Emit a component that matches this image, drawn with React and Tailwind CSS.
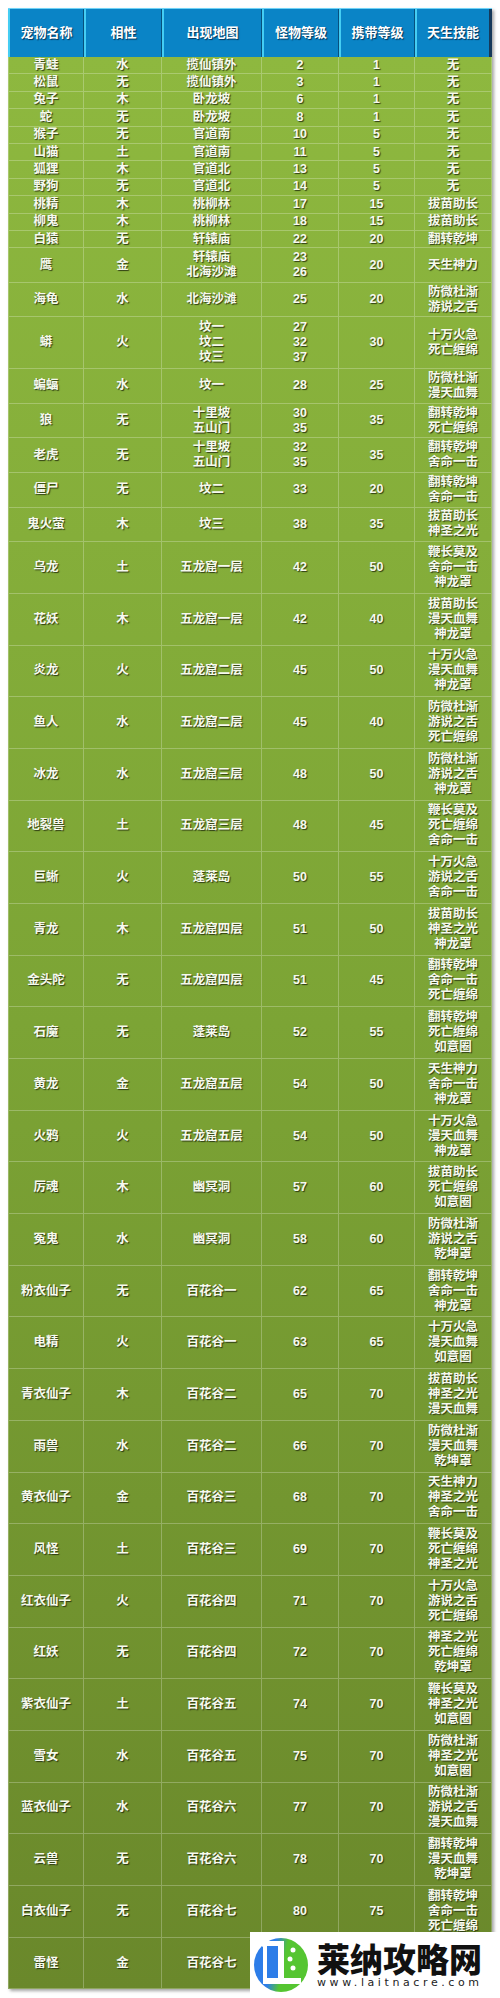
import React from 'react';

// column widths, left to right
const COLS = ['w-[76px]', 'w-[78px]', 'w-[100px]', 'w-[77px]', 'w-[76px]', 'w-[77px]'];
const ROW_H = { 1: 'h-[17.4px]', 2: 'h-[34.6px]', 3: 'h-[51.7px]' };

const HEAD = ['宠物名称', '相性', '出现地图', '怪物等级', '携带等级', '天生技能'];

const PETS = [
    ['青蛙', '水', '揽仙镇外', '2', '1', '无'],
    ['松鼠', '无', '揽仙镇外', '3', '1', '无'],
    ['兔子', '木', '卧龙坡', '6', '1', '无'],
    ['蛇', '无', '卧龙坡', '8', '1', '无'],
    ['猴子', '无', '官道南', '10', '5', '无'],
    ['山猫', '土', '官道南', '11', '5', '无'],
    ['狐狸', '木', '官道北', '13', '5', '无'],
    ['野狗', '无', '官道北', '14', '5', '无'],
    ['桃精', '木', '桃柳林', '17', '15', '拔苗助长'],
    ['柳鬼', '木', '桃柳林', '18', '15', '拔苗助长'],
    ['白猿', '无', '轩辕庙', '22', '20', '翻转乾坤'],
    ['鹰', '金', '轩辕庙/北海沙滩', '23/26', '20', '天生神力'],
    ['海龟', '水', '北海沙滩', '25', '20', '防微杜渐/游说之舌'],
    ['蟒', '火', '坟一/坟二/坟三', '27/32/37', '30', '十万火急/死亡缠绵'],
    ['蝙蝠', '水', '坟一', '28', '25', '防微杜渐/漫天血舞'],
    ['狼', '无', '十里坡/五山门', '30/35', '35', '翻转乾坤/死亡缠绵'],
    ['老虎', '无', '十里坡/五山门', '32/35', '35', '翻转乾坤/舍命一击'],
    ['僵尸', '无', '坟二', '33', '20', '翻转乾坤/舍命一击'],
    ['鬼火萤', '木', '坟三', '38', '35', '拔苗助长/神圣之光'],
    ['乌龙', '土', '五龙窟一层', '42', '50', '鞭长莫及/舍命一击/神龙罩'],
    ['花妖', '木', '五龙窟一层', '42', '40', '拔苗助长/漫天血舞/神龙罩'],
    ['炎龙', '火', '五龙窟二层', '45', '50', '十万火急/漫天血舞/神龙罩'],
    ['鱼人', '水', '五龙窟二层', '45', '40', '防微杜渐/游说之舌/死亡缠绵'],
    ['冰龙', '水', '五龙窟三层', '48', '50', '防微杜渐/游说之舌/神龙罩'],
    ['地裂兽', '土', '五龙窟三层', '48', '45', '鞭长莫及/死亡缠绵/舍命一击'],
    ['巨蜥', '火', '蓬莱岛', '50', '55', '十万火急/游说之舌/舍命一击'],
    ['青龙', '木', '五龙窟四层', '51', '50', '拔苗助长/神圣之光/神龙罩'],
    ['金头陀', '无', '五龙窟四层', '51', '45', '翻转乾坤/舍命一击/死亡缠绵'],
    ['石魔', '无', '蓬莱岛', '52', '55', '翻转乾坤/死亡缠绵/如意圈'],
    ['黄龙', '金', '五龙窟五层', '54', '50', '天生神力/舍命一击/神龙罩'],
    ['火鸦', '火', '五龙窟五层', '54', '50', '十万火急/漫天血舞/神龙罩'],
    ['厉魂', '木', '幽冥洞', '57', '60', '拔苗助长/死亡缠绵/如意圈'],
    ['冤鬼', '水', '幽冥洞', '58', '60', '防微杜渐/游说之舌/乾坤罩'],
    ['粉衣仙子', '无', '百花谷一', '62', '65', '翻转乾坤/舍命一击/神龙罩'],
    ['电精', '火', '百花谷一', '63', '65', '十万火急/漫天血舞/如意圈'],
    ['青衣仙子', '木', '百花谷二', '65', '70', '拔苗助长/神圣之光/漫天血舞'],
    ['雨兽', '水', '百花谷二', '66', '70', '防微杜渐/漫天血舞/乾坤罩'],
    ['黄衣仙子', '金', '百花谷三', '68', '70', '天生神力/神圣之光/舍命一击'],
    ['风怪', '土', '百花谷三', '69', '70', '鞭长莫及/死亡缠绵/神圣之光'],
    ['红衣仙子', '火', '百花谷四', '71', '70', '十万火急/游说之舌/死亡缠绵'],
    ['红妖', '无', '百花谷四', '72', '70', '神圣之光/死亡缠绵/乾坤罩'],
    ['紫衣仙子', '土', '百花谷五', '74', '70', '鞭长莫及/神圣之光/如意圈'],
    ['雪女', '水', '百花谷五', '75', '70', '防微杜渐/神圣之光/如意圈'],
    ['蓝衣仙子', '水', '百花谷六', '77', '70', '防微杜渐/游说之舌/漫天血舞'],
    ['云兽', '无', '百花谷六', '78', '70', '翻转乾坤/漫天血舞/乾坤罩'],
    ['白衣仙子', '无', '百花谷七', '80', '75', '翻转乾坤/舍命一击/死亡缠绵'],
    // last row: the right half is hidden under the watermark
    ['雷怪', '金', '百花谷七', '', '', '//'],
];

function Logo() {
    return (
        <svg width="56" height="56" viewBox="0 0 56 56">
            <defs>
                <linearGradient id="lgo" x1="0" y1="0" x2="1" y2="0.2">
                    <stop offset="0.4" stopColor="#2d7de8" />
                    <stop offset="0.62" stopColor="#55c531" />
                </linearGradient>
            </defs>
            <circle cx="28" cy="28" r="27" fill="url(#lgo)" />
            <path d="M8 6 Q6 4 9 4 H31 V41 H48 V47 H10 V10 Q8 9 8 6 Z" fill="#fff" />
            <rect x="14" y="9" width="11" height="32" fill="#2d7de8" />
            <circle cx="40" cy="13" r="2.5" fill="#fff" />
            <circle cx="37" cy="22" r="2.5" fill="#fff" />
            <circle cx="40" cy="31" r="2.5" fill="#fff" />
        </svg>
    );
}

function Row({ pet }) {
    const cells = pet.map((c) => c.split('/'));
    const lines = Math.max(...cells.map((c) => c.length));
    return (
        <div className={`flex ${ROW_H[lines]}`}>
            {cells.map((c, i) => (
                <div
                    key={i}
                    className={`${COLS[i]} flex flex-col items-center justify-center border-b border-r border-white/25 ${i === 0 ? 'border-l' : ''}`}
                >
                    {c.map((t, j) => (
                        <span key={j}>{t}</span>
                    ))}
                </div>
            ))}
        </div>
    );
}

export default function App() {
    return (
        <div className="relative min-h-[1998px] bg-white pl-2 pt-2 font-['Liberation_Sans','Noto_Sans_CJK_SC',sans-serif]">
            <div className="w-[484px] shadow-[2px_2px_3px_rgba(0,0,0,0.35)]">
                {/* header */}
                <div className="flex h-[49px] border-t border-[#6fd3f7] bg-[#0a84c6]">
                    {HEAD.map((h, i) => (
                        <div
                            key={h}
                            className={`${COLS[i]} flex items-center justify-center border-l-2 border-r border-l-[#45cdf3] border-r-[#07507d] text-[13px] font-bold text-white [text-shadow:1px_1px_1px_rgba(0,30,60,0.8)] ${i === 5 ? 'border-r-[3px] border-r-[#16395a]' : ''}`}
                        >
                            {h}
                        </div>
                    ))}
                </div>

                {/* body */}
                <div className="bg-linear-to-b from-[#8eb83f] via-[#7ca435] to-[#6a882b] text-[12.5px] leading-[15px] font-bold text-[#f6f9ee] [text-shadow:1px_1px_1px_rgba(30,40,10,0.85)]">
                    {PETS.map((p) => (
                        <Row key={p[0]} pet={p} />
                    ))}
                </div>
            </div>

            {/* watermark */}
            <div className="absolute bottom-0 left-[250px] flex h-[66px] w-[250px] items-center gap-2 bg-white pl-[3px]">
                <Logo />
                <div className="flex flex-col">
                    <span className="font-['Noto_Sans_CJK_SC',sans-serif] text-[33px] font-black leading-[36px] text-[#111]">
                        莱纳攻略网
                    </span>
                    <span className="font-['DejaVu_Sans',sans-serif] text-[11px] leading-[14px] tracking-[3.6px] text-[#222]">
                        www.laitnacre.com
                    </span>
                </div>
            </div>
        </div>
    );
}
